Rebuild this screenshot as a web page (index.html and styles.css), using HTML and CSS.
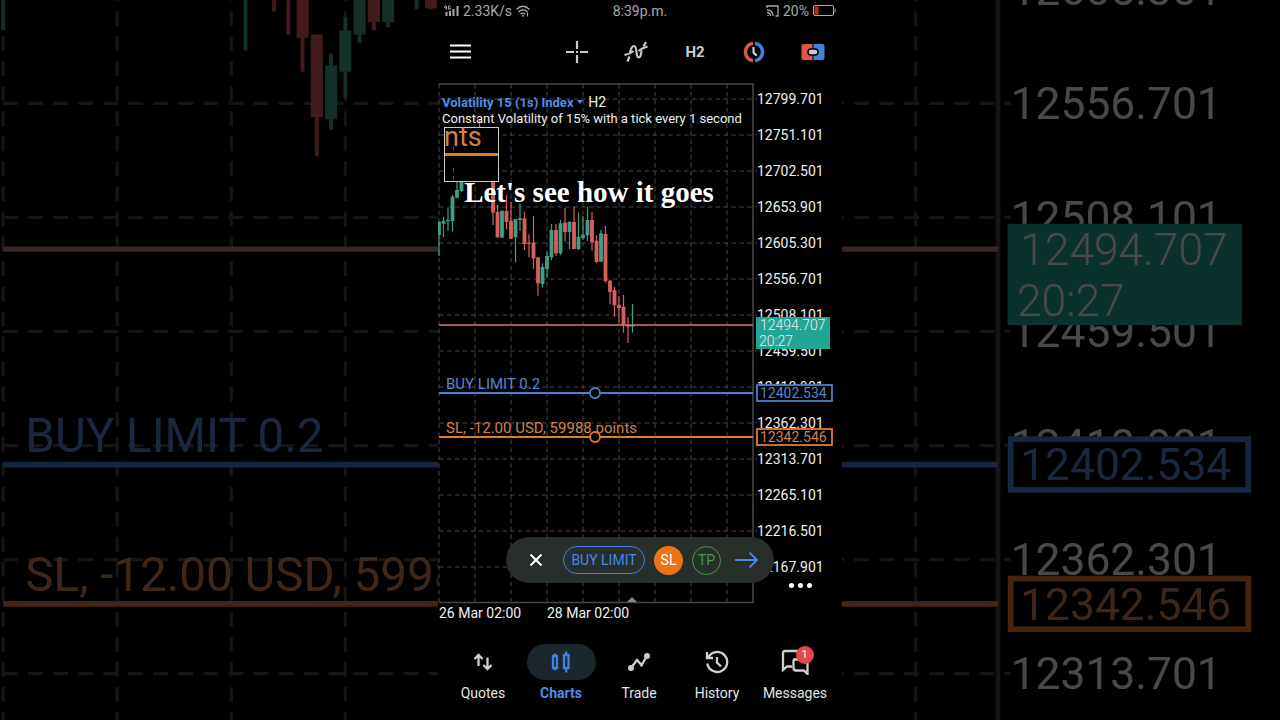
FILE: index.html
```html
<!DOCTYPE html>
<html lang="en">
<head>
    <meta charset="UTF-8">
    <title>Chart</title>
    <link rel="stylesheet" href="styles.css">
</head>
<body>
    <svg class="backdrop" viewBox="0 170 404 228" preserveAspectRatio="xMidYMid slice" aria-hidden="true"></svg>
    <div id="phone">
        <div class="status">
            <div class="status-left">
                <svg width="15" height="12" viewBox="0 0 15 12">
                    <path d="M1.500 0.500L0.500 3H3M2.500 1V4.500M6.500 1H4.500V4H6.500V2.500" class="thin"/>
                    <path d="M2.500 7v4M6 6v5M9.500 4v7M13.500 1v10" class="thin bars"/>
                </svg>
                <span>2.33K/s</span>
                <svg width="14" height="12" viewBox="0 0 14 12">
                    <path d="M.5 4.500Q7 -2 13.500 4.500M2.500 7Q7 2.800 11.500 7M4.500 9.300Q7 7 9 9.300" class="thin wifi"/>
                    <circle cx="7" cy="10.800" r="1" fill="#aaa"/>
                    <path d="M11.500 7.500v4" class="thin"/>
                </svg>
            </div>
            <span class="time">8:39p.m.</span>
            <div class="status-right">
                <svg width="13" height="12" viewBox="0 0 13 12">
                    <path d="M1 3V1h11v10H9.500M1 5q6 0 6 6M1 7.500q3.500 0 3.500 3.500M2 10v1" class="thin wifi"/>
                </svg>
                <span>20%</span>
                <svg width="23" height="11" viewBox="0 0 23 11">
                    <rect x="0.500" y="0.500" width="20" height="10" rx="1.500" class="thin"/>
                    <rect x="1.500" y="1.500" width="4" height="8" fill="#d41f1f"/>
                    <path d="M22 3.500v4" class="thin"/>
                </svg>
            </div>
        </div>
        <div class="toolbar">
            <button class="menu" aria-label="Menu">
                <svg width="21" height="15" viewBox="0 0 21 15"><path d="M0 1.500h21M0 7.500h21M0 13.500h21" stroke="#fff" stroke-width="2.200"/></svg>
            </button>
            <button class="tool" aria-label="Crosshair">
                <svg width="24" height="24" viewBox="0 0 24 24"><path d="M12 1v8M12 15v8M1 12h8M15 12h8M11 12h2" stroke="#ccc" stroke-width="2.200"/></svg>
            </button>
            <button class="tool" aria-label="Indicators">
                <svg width="24" height="22" viewBox="0 0 24 22" fill="none" stroke="#ccc" stroke-width="2.200">
                    <path d="M3.500 20.500L5.500 15.500M6 11.500Q7.500 5 10 5C13.500 5 11.500 16.500 14.500 16.500Q17 16.500 17.500 9.500M19.500 5.500L22 1"/>
                    <path d="M.5 14Q6 13 9.500 10M14.500 10Q18 7 23.500 5.500"/>
                </svg>
            </button>
            <button class="tool period">H2</button>
            <button class="tool" aria-label="Trade time">
                <svg width="24" height="22" viewBox="0 0 24 22" fill="none">
                    <path d="M11 2.200A8.900 8.900 0 0 0 11 19.800" stroke="#d2574a" stroke-width="3.600"/>
                    <path d="M13 2.200A8.900 8.900 0 0 1 13 19.800" stroke="#3f82dc" stroke-width="3.600"/>
                    <path d="M11.500 6v5.500l3.200 3.200" stroke="#ddd" stroke-width="2"/>
                </svg>
            </button>
            <button class="tool" aria-label="One click trading">
                <svg width="24" height="18" viewBox="0 0 24 18">
                    <path d="M2.500 1H11.500V17H2.500Q.5 17 .5 15V3Q.5 1 2.500 1z" fill="#dd5548"/>
                    <path d="M12.500 1H21.500Q23.500 1 23.500 3V15Q23.500 17 21.500 17H12.500z" fill="#3f82dc"/>
                    <rect x="7" y="6" width="10" height="6" rx="3" fill="#ccc" stroke="#000" stroke-width="1.500"/>
                </svg>
            </button>
        </div>
        <div class="chart">
            <svg class="plot" viewBox="0 0 404 548"></svg>
            <div class="symbol">
                <button>Volatility 15 (1s) Index <i></i></button>
                <span>H2</span>
                <p>Constant Volatility of 15% with a tick every 1 second</p>
            </div>
            <p class="caption">Let's see how it goes</p>
            <button class="more" aria-label="More">
                <i></i><i></i><i></i>
            </button>
            <div class="order">
                <button class="close" aria-label="Close">
                    <svg width="12" height="12" viewBox="0 0 12 12"><path d="M.5.5l11 11M11.500.5l-11 11" stroke="#fff" stroke-width="2"/></svg>
                </button>
                <button class="type">BUY LIMIT</button>
                <button class="round sl">SL</button>
                <button class="round tp">TP</button>
                <button class="send" aria-label="Place order">
                    <svg width="23" height="16" viewBox="0 0 23 16"><path d="M0 8h22M14.500.7L22 8l-7.500 7.300" fill="none" stroke="#4488e4" stroke-width="2"/></svg>
                </button>
            </div>
        </div>
        <nav>
            <a href="#quotes">
                <span class="icon"><svg width="20" height="18" viewBox="0 0 20 18"><path d="M5.500 13V2M1.500 6l4-4 4 4M14.500 4.500V16M10.500 12l4 4 4-4" class="line"/></svg></span>
                Quotes
            </a>
            <a href="#charts" class="active">
                <span class="icon"><svg width="20" height="22" viewBox="0 0 20 22"><path d="M2 5h4v12H2zM4 2.500V5M4 17v2.500M13 4h4.500v13H13zM15.200.5V4M15.200 17v4.500" class="line"/></svg></span>
                Charts
            </a>
            <a href="#trade">
                <span class="icon"><svg width="22" height="18" viewBox="0 0 22 18"><path d="M3 15L9 7l4.500 5L19 3" class="line"/><circle cx="3" cy="15" r="3"/><circle cx="9" cy="7.500" r="1.600"/><circle cx="13.500" cy="12" r="1.600"/><circle cx="19" cy="3" r="3"/></svg></span>
                Trade
            </a>
            <a href="#history">
                <span class="icon"><svg width="24" height="24" viewBox="0 0 24 24"><path d="M3.500 7A10 10 0 1 1 2.300 13.500M2 2v6h6M12 7v5.500l4 4" class="line"/></svg></span>
                History
            </a>
            <a href="#messages">
                <span class="icon">
                    <svg width="28" height="26" viewBox="0 0 28 26"><path d="M22 2H4Q2 2 2 4V21L6 17.500H11M12 10.500H24Q26.500 10.500 26.500 12.500V25L23 21.500H15Q12.500 21.500 12.500 19V10.500" class="line"/></svg>
                    <b class="badge">1</b>
                </span>
                Messages
            </a>
        </nav>
    </div>
    <script src="chart.js"></script>
</body>
</html>
```
FILE: styles.css
```css
*{
    margin: 0;
    padding: 0;
    box-sizing: border-box;
}
body{
    background: #000;
    color: #e4e4e4;
    font: 14px/16px Roboto, sans-serif;
    overflow: hidden;
}
button{
    background: none;
    border: 0;
    color: inherit;
    font: inherit;
    cursor: pointer;
}
svg{
    display: block;
}
.backdrop{
    position: fixed;
    left: 0;
    top: 0;
    width: 100%;
    height: 100%;
    opacity: .3;
}
#phone{
    position: relative;
    height: 100vh;
    aspect-ratio: 101 / 180;
    margin: 0 auto;
    background: #000;
}

/* status bar */
.status{
    display: grid;
    grid-template-columns: 1fr auto 1fr;
    align-items: center;
    height: 21px;
    padding: 0 6px;
    color: #aaa;
}
.status-left, .status-right{
    display: flex;
    align-items: center;
    gap: 4px;
}
.status-right{
    justify-content: flex-end;
}
.thin{
    fill: none;
    stroke: #aaa;
}
.bars{
    stroke-width: 2;
}
.wifi{
    stroke-width: 1.3;
}

/* toolbar */
.toolbar{
    display: flex;
    align-items: center;
    height: 55px;
    padding: 6px 0 0 12px;
}
.menu{
    margin-right: auto;
}
.tool{
    display: flex;
    justify-content: center;
    width: 15%;
}
.period{
    color: #ccc;
    font-size: 15px;
    font-weight: 700;
}

/* chart */
.chart{
    position: relative;
}
.plot{
    width: 100%;
}
.grid{
    fill: none;
    stroke: #484848;
    stroke-dasharray: 4.7 3.2;
}
.frame{
    fill: none;
    stroke: #484848;
    stroke-width: 1.5;
}
.label{
    fill: #f0f0f0;
    font-size: 14px;
}
.up{
    fill: #3f9e88;
}
.down{
    fill: #d95f5c;
}
.bid{
    stroke: #c87a7a;
    stroke-width: 1.7;
}
.limit, .stop{
    fill: #000;
    stroke: #4a7fd0;
    stroke-width: 1.8;
}
.stop{
    stroke: #e07a35;
}
.limit-text{
    fill: #5585d0;
}
.stop-text{
    fill: #cf8050;
}
.bid-box{
    fill: #22a595;
}
.order-text{
    font-size: 15px;
}
.bid-text{
    font-weight: 300;
}
.loupe{
    stroke: #ccc;
}
.loupe-text{
    font-size: 27px;
}
.loupe-line{
    fill: #dd7a28;
}
.symbol{
    position: absolute;
    left: 4px;
    top: 18px;
    font-size: 14px;
    color: #f0f0f0;
}
.symbol button{
    margin-right: 2px;
    color: #4f8ee6;
    font-size: 13px;
    font-weight: 700;
}
.symbol button i{
    display: inline-block;
    border: 3px solid transparent;
    border-top: 4px solid #4f8ee6;
    border-bottom: 0;
    vertical-align: 3px;
}
.symbol p{
    font-size: 13px;
    white-space: nowrap;
}
.caption{
    position: absolute;
    left: 0;
    right: 0;
    top: 100px;
    padding-right: 102px;
    color: #fff;
    font: bold 29px/32px "Liberation Serif", serif;
    text-align: center;
}
.more{
    position: absolute;
    right: 30px;
    bottom: 36px;
    display: flex;
    gap: 4px;
}
.more i{
    width: 5px;
    height: 5px;
    border-radius: 50%;
    background: #fff;
}
.order{
    position: absolute;
    left: 68px;
    bottom: 41px;
    display: flex;
    align-items: center;
    height: 46px;
    padding: 0 16px 0 24px;
    border-radius: 23px;
    background: #282e2a;
}
.type{
    width: 82px;
    height: 28px;
    margin-left: 21px;
    border: 1px solid #3f7fd6;
    border-radius: 14px;
    color: #4488e4;
}
.round{
    width: 29px;
    height: 29px;
    margin-left: 9px;
    border-radius: 50%;
}
.sl{
    background: #ea7414;
    color: #fff;
}
.tp{
    border: 1px solid #3f9a4c;
    color: #3f9a4c;
}
.send{
    margin-left: 14px;
}

/* bottom tabs */
nav{
    display: flex;
    padding: 20px 8px 0 6px;
}
nav a{
    flex: 1 1 0;
    display: flex;
    flex-direction: column;
    align-items: center;
    gap: 5px;
    color: #e4e4e4;
    text-decoration: none;
}
.icon{
    position: relative;
    display: flex;
    align-items: center;
    justify-content: center;
    width: 69px;
    height: 36px;
    border-radius: 18px;
    fill: #ccc;
    stroke: none;
}
.line{
    fill: none;
    stroke: #d0d0d0;
    stroke-width: 2.3;
}
nav .active{
    color: #4f8ee6;
    font-weight: 700;
}
.active .icon{
    background: #1b272c;
}
.active .line{
    stroke: #3f82e6;
}
.badge{
    position: absolute;
    right: 16px;
    top: 2px;
    width: 18px;
    height: 18px;
    border-radius: 50%;
    background: #e04a48;
    color: #fff;
    font-size: 11px;
    font-weight: 400;
    line-height: 18px;
    text-align: center;
}
```
FILE: chart.js
```js
/* slot, high, low, body top, body bottom, direction */
var candles = [
    [0, 145.7, 180, 145.7, 159, 1],
    [1, 140.7, 161.3, 145, 147.7, 1],
    [2, 132.3, 154.7, 144, 145.3, 1],
    [3, 119, 155.7, 120.7, 145, 1],
    [4, 105.7, 122.3, 114, 121.7, 1],
    [5, 105, 116, 106, 115, 1],
    [9, 44, 80, 60, 75, 0],
    [12, 100, 149, 100, 136.7, 0],
    [13, 129, 161.7, 136, 161.3, 0],
    [14, 134.7, 161.7, 134.7, 161.7, 1],
    [15, 119, 153.3, 135, 146, 0],
    [16, 125.7, 163.3, 144.7, 162.7, 0],
    [17, 143, 186.3, 143, 161.3, 1],
    [18, 127.3, 155, 142.3, 144, 1],
    [19, 135.7, 174, 142.3, 168, 0],
    [20, 158.3, 181.3, 166.7, 167.7, 0],
    [21, 140, 193, 166.7, 182.3, 0],
    [22, 181.3, 219.7, 181.3, 207.3, 0],
    [23, 187.3, 211.3, 191, 208, 1],
    [24, 175.7, 201.3, 180, 193, 1],
    [25, 148, 184, 154, 181.3, 1],
    [26, 148, 180, 154, 177.3, 0],
    [27, 144, 179, 147.3, 177.3, 1],
    [28, 131.7, 165.7, 146.7, 156, 0],
    [29, 145.7, 173.3, 145.7, 156, 1],
    [30, 130.7, 173.3, 146, 173, 0],
    [31, 136.7, 174, 160.7, 173, 1],
    [32, 140, 164, 158.7, 162, 1],
    [33, 130.7, 165, 144, 159.3, 1],
    [34, 135.7, 174.7, 144, 166, 0],
    [35, 159.3, 187.3, 164.7, 186, 0],
    [36, 154, 186, 157.3, 185.7, 1],
    [37, 150, 206.7, 158, 205, 0],
    [38, 204, 228, 204.7, 216, 0],
    [39, 210.7, 240.7, 214, 229.3, 0],
    [40, 220, 246.7, 228.7, 232, 0],
    [41, 219, 256.7, 230.7, 249.3, 0],
    [42, 240.7, 267, 248.7, 250.7, 0],
    [43, 228, 256.7, 248.7, 250.7, 1]
];

function text(x, y, cls, str) {
    return '<text x="' + x + '" y="' + y + '" class="label ' + cls + '">' + str + '</text>';
}
function line(x1, y1, x2, y2, cls) {
    return '<path d="M' + x1 + ' ' + y1 + 'L' + x2 + ' ' + y2 + '" class="' + cls + '"/>';
}
function rect(x, y, w, h, cls) {
    return '<rect x="' + x + '" y="' + y + '" width="' + w + '" height="' + h + '" class="' + cls + '"/>';
}

function draw(svg) {
    var box = svg.viewBox.baseVal;
    var full = box.y === 0;
    var out = '';
    var i, y;

    /* grid and price scale */
    for (i = 0; i < 9; i++) {
        out += line(1 + i * 36, 8, 1 + i * 36, 526, 'grid');
    }
    for (i = 0; i < 14; i++) {
        y = 23 + i * 36;
        out += line(1, y, 319, y, 'grid');
        if (y > box.y - 10 && y < box.y + box.height + 10) {
            out += text(319, y + 5, '', (12799.701 - i * 48.6).toFixed(3));
        }
    }
    out += '<path d="M1 8H315V526.500H1" class="frame"/>';

    candles.forEach(function (c) {
        var x = 1 + c[0] * 4.5;
        var cls = c[5] ? 'up' : 'down';
        out += rect(x - 0.6, c[1], 1.2, c[2] - c[1], cls);
        out += rect(x - 1.9, c[3], 3.8, c[4] - c[3], cls);
    });

    /* current price */
    out += line(1, 249, 315, 249, 'bid');
    out += rect(318, 241, 74, 32, 'bid-box');
    out += text(322, 254, 'bid-text', '12494.707');
    out += text(321, 270, 'bid-text', '20:27');

    /* pending order */
    out += line(1, 317, 315, 317, 'limit');
    out += text(8, 313, 'limit-text order-text', 'BUY LIMIT 0.2');
    out += rect(319, 309, 75, 16, 'limit');
    out += text(322, 322, 'limit-text', '12402.534');

    out += line(1, 361, 315, 361, 'stop');
    out += text(8, 357, 'stop-text order-text', 'SL, -12.00 USD, 59988 points');
    out += rect(319, 353, 75, 16, 'stop');
    out += text(322, 366, 'stop-text', '12342.546');

    if (full) {
        out += '<circle cx="157" cy="317" r="5" class="limit"/>';
        out += '<circle cx="157" cy="361" r="5" class="stop"/>';
        /* magnifier */
        out += rect(6.5, 51.5, 54, 54, 'loupe');
        out += text(6, 70, 'stop-text loupe-text', 'nts');
        out += '<path d="M15.500 70v7M15.500 92v12" class="grid"/>';
        out += rect(7, 77, 53, 3, 'loupe-line');
        out += '<path d="M189 526L194 521L199 526Z" fill="#888"/>';
        out += text(1, 542, '', '26 Mar 02:00');
        out += text(109, 542, '', '28 Mar 02:00');
    }
    svg.innerHTML = out;
}

draw(document.querySelector('.backdrop'));
draw(document.querySelector('.plot'));
```
